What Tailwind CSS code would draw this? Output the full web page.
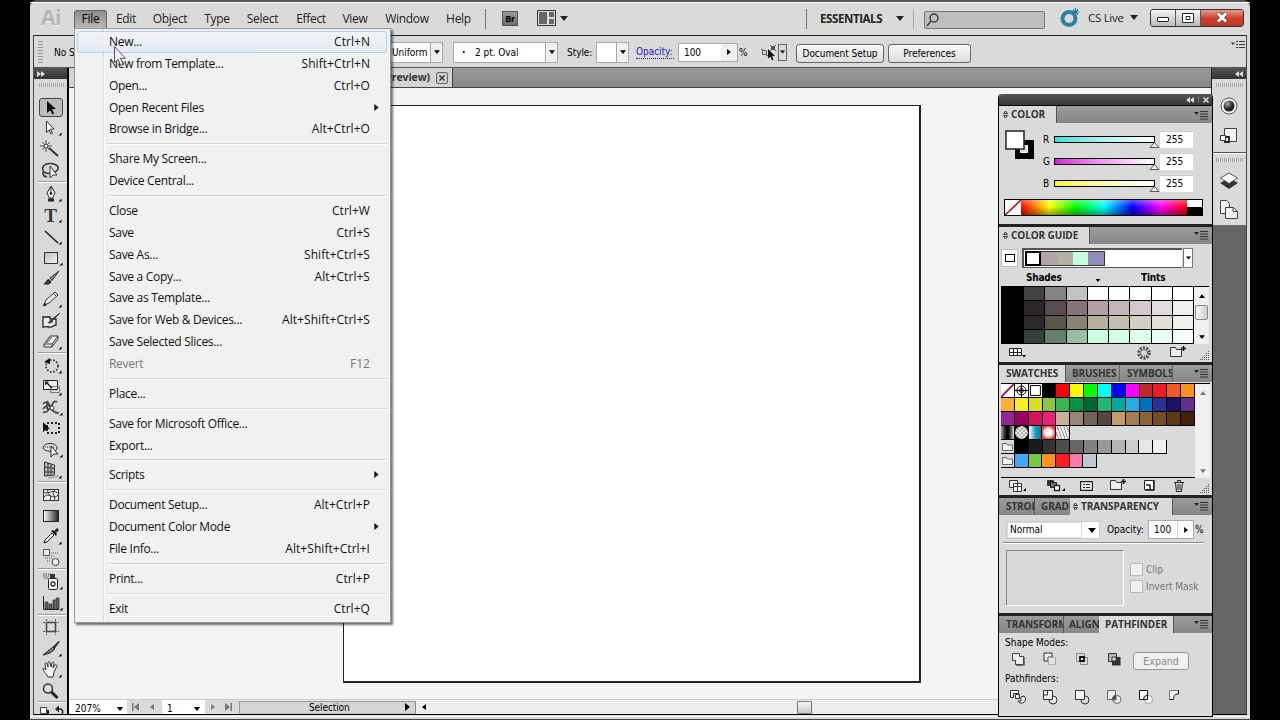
<!DOCTYPE html>
<html lang="en">
<head>
    <meta charset="UTF-8">
    <meta name="viewport" content="width=device-width, initial-scale=1.0">
    <title>Illustrator - File menu</title>
    <script src="https://cdn.jsdelivr.net/npm/@tailwindcss/browser@4"></script>
</head>
<body class="relative w-[1280px] h-[720px] overflow-hidden bg-black font-['DejaVu_Sans_Condensed','DejaVu_Sans',sans-serif] text-[10px] text-black">

    <!-- shared shapes -->
    <svg class="hidden">
        <symbol id="down" viewBox="0 0 8 5"><path d="M0 0h8L4 5z" fill="currentColor"/></symbol>
        <symbol id="right" viewBox="0 0 5 8"><path d="M0 0v8l5-4z" fill="currentColor"/></symbol>
        <symbol id="flyout" viewBox="0 0 14 10"><path d="M0 2h5L2.500 5z" fill="#222"/><path d="M6 1.500h8M6 4h8M6 6.500h8M6 9h8" stroke="#333"/></symbol>
        <symbol id="updown" viewBox="0 0 5 9"><path d="M.5 3.500L2.500 1l2 2.500zM.5 5.500L2.500 8l2-2.500z" fill="none" stroke="#222" stroke-width=".9"/></symbol>
        <symbol id="grip" viewBox="0 0 10 10"><path d="M9 1.500h1M7 3.500h1M9 3.500h1M5 5.500h1M7 5.500h1M9 5.500h1M3 7.500h1M5 7.500h1M7 7.500h1M9 7.500h1M1 9.500h1M3 9.500h1M5 9.500h1M7 9.500h1M9 9.500h1" stroke="#555"/></symbol>
        <symbol id="corner" viewBox="0 0 5 5"><path d="M4.500 .5v4h-4z" fill="#111"/></symbol>
        <symbol id="folderplus" viewBox="0 0 18 13"><path d="M1.500 11.500v-9h5l1 2h5v7z" fill="#eee" stroke="#333"/><path d="M12 3.500h5M14.500 1v5" stroke="#111" stroke-width="1.500"/></symbol>
    </svg>

    <!-- application window -->
    <div class="ml-[30px] w-[1220px] h-[720px] flex flex-col bg-[#dadada] border-t-2 border-t-[#59545a] rounded-t-md">

        <!-- menu bar -->
        <header class="h-[34px] flex items-center border-t border-white font-['Open_Sans','Noto_Sans',sans-serif] text-[12px] tracking-[-0.3px] text-[#222]">
            <div class="ml-[11px] mt-[-3px] w-[33px] text-[21px] leading-none font-bold text-[#b5b5b5] tracking-[-0.5px] [text-shadow:0_1px_0_#f4f4f4]">Ai</div>
            <div class="h-[18px] mt-[-1px] w-[33px] leading-[16px] text-center rounded-t-[3px] border border-b-0 border-[#666] bg-linear-to-b from-[#8e8e8e] to-[#b8b8b8] text-black">File</div>
            <div class="w-[38px] text-center">Edit</div>
            <div class="w-[50px] text-center">Object</div>
            <div class="w-[44px] text-center">Type</div>
            <div class="w-[47px] text-center">Select</div>
            <div class="w-[50px] text-center">Effect</div>
            <div class="w-[38px] text-center">View</div>
            <div class="w-[66px] text-center">Window</div>
            <div class="w-[37px] text-center">Help</div>
            <div class="ml-[8px] w-px h-[20px] bg-[#777]"></div>
            <div class="ml-[16px] mt-[-2px] w-[16px] h-[15px] border border-[#555] bg-linear-to-b from-[#999] to-[#6f6f6f] text-[9px] leading-[13px] font-bold text-center text-black">Br</div>
            <svg class="ml-[19px] mt-[-2px]" width="19" height="16"><path d="M.5.500h18v15H.5z" fill="#ddd" stroke="#333"/><path d="M2 2h8v12H2zM12 2h5v5h-5zM12 9h5v5h-5z" fill="#666"/></svg>
            <svg class="ml-[4px] mt-[-1px]" width="8" height="5"><use href="#down"/></svg>
            <div class="ml-[238px] w-px h-[20px] bg-[#777]"></div>
            <div class="ml-[13px] mt-[-1px] w-[70px] text-[11.500px] font-bold tracking-[-0.4px] whitespace-nowrap">ESSENTIALS</div>
            <svg class="ml-[6px] mt-[-1px]" width="8" height="5"><use href="#down"/></svg>
            <div class="ml-[9px] w-px h-[20px] bg-[#aaa]"></div>
            <div class="ml-[10px] mt-[2px] w-[121px] h-[18px] bg-[#bebebe] border border-[#777] rounded-[2px]">
                <svg width="16" height="16" fill="none" stroke="#333" stroke-width="1.300"><circle cx="9" cy="6" r="4"/><path d="M6 9l-4 5"/></svg>
            </div>
            <svg class="ml-[14px] mt-[-3px]" width="22" height="19"><circle cx="10" cy="10.500" r="6.500" fill="none" stroke="#2b7fa4" stroke-width="4"/><path d="M16.500 0v8M12.500 4h8M14 1.500l5 5M19 1.500l-5 5" stroke="#2b7fa4" stroke-width="1.100"/></svg>
            <div class="ml-[7px] mt-[-2px] w-[37px] text-[11.500px] whitespace-nowrap">CS Live</div>
            <svg class="ml-[5px] mt-[-3px]" width="8" height="5"><use href="#down"/></svg>
            <div class="ml-[12px] mt-[-3px] flex h-[18px] border border-[#333] rounded-[3px] overflow-hidden">
                <div class="w-[25px] flex items-center justify-center bg-linear-to-b from-[#f5f5f5] to-[#bbb] border-r border-[#555]"><div class="mt-[3px] w-[12px] h-[5px] bg-white border border-[#222] rounded-[1px]"></div></div>
                <div class="w-[25px] flex items-center justify-center bg-linear-to-b from-[#f5f5f5] to-[#bbb] border-r border-[#555]"><svg width="12" height="10" fill="#fff" stroke="#222"><path d="M.5.500h11v9H.5zM4 3.500h4v3H4z"/></svg></div>
                <div class="w-[42px] flex items-center justify-center bg-linear-to-b from-[#e39a8d] via-[#d0402c] via-50% to-[#b93a2a]"><svg width="12" height="11"><path d="M2 1.500l8 8M10 1.500l-8 8" stroke="#444" stroke-width="4.500"/><path d="M2 1.500l8 8M10 1.500l-8 8" stroke="#fff" stroke-width="3"/></svg></div>
            </div>
        </header>

        <!-- everything under the menu bar -->
        <div class="mx-[3px] w-[1214px] h-[680px] flex flex-col border border-t-[#222] border-b-black border-x-[#444]">

            <!-- control bar -->
            <div class="h-[31px] flex items-center pt-[1px] text-[10px] tracking-[-0.050px]">
                <div class="ml-[4px] w-[5px] h-[22px] bg-[repeating-linear-gradient(to_bottom,#999_0_1px,transparent_1px_3px)]"></div>
                <div class="ml-[11px] w-[336px] whitespace-nowrap">No Selection</div>
                <div class="w-[53px] h-[21px] flex items-center bg-white border border-[#aaa]">
                    <span class="ml-[1px] w-[40px]">Uniform</span>
                    <div class="w-[12px] h-full flex items-center justify-center border-l border-[#aaa] bg-[#f0f0f0]"><svg width="6" height="4"><use href="#down"/></svg></div>
                </div>
                <div class="ml-[10px] w-[105px] h-[21px] flex items-center bg-white border border-[#aaa]">
                    <span class="ml-[8px] w-[13px] font-bold">·</span>
                    <span class="w-[70px]">2 pt. Oval</span>
                    <div class="w-[12px] h-full flex items-center justify-center border-l border-[#aaa] bg-[#f0f0f0]"><svg width="6" height="4"><use href="#down"/></svg></div>
                </div>
                <div class="ml-[9px] w-[29px]">Style:</div>
                <div class="w-[33px] h-[21px] flex justify-end bg-white border border-[#aaa]">
                    <div class="w-[12px] h-full flex items-center justify-center border-l border-[#aaa] bg-[#f0f0f0]"><svg width="6" height="4"><use href="#down"/></svg></div>
                </div>
                <div class="ml-[7px] w-[38px] text-[#1a1ac0] border-b border-dotted border-[#1a1ac0] leading-[13px] whitespace-nowrap">Opacity:</div>
                <div class="ml-[4px] w-[60px] h-[19px] flex items-center bg-white border border-[#aaa]">
                    <span class="ml-[5px] w-[37px]">100</span>
                    <div class="w-[16px] h-full flex items-center justify-center bg-[#f0f0f0]"><svg width="4" height="6"><use href="#right"/></svg></div>
                </div>
                <div class="ml-[1px] w-[22px]">%</div>
                <svg width="17" height="17" fill="none" stroke="#555"><path d="M1.500 6.500h4v4h-4zM10.500 2.500h3v3h-3zM0 5l2 1M5 11l2 1M9 1l6 6M15 1L9 7"/><path d="M7 5l7 7-3 .2 1.500 3.500-1.500.6-1.500-3.500L7 14.500z" fill="#111" stroke="none"/></svg>
                <div class="w-[9px] h-[17px] flex items-center justify-center border border-[#666]"><svg width="5" height="4"><use href="#down"/></svg></div>
                <div class="ml-[9px] mt-[2px] w-[88px] h-[19px] leading-[17px] text-center border border-[#666] rounded-[3px] bg-linear-to-b from-[#f8f8f8] to-[#ddd]">Document Setup</div>
                <div class="ml-[4px] mt-[2px] w-[83px] h-[19px] leading-[17px] text-center border border-[#666] rounded-[3px] bg-linear-to-b from-[#f8f8f8] to-[#ddd]">Preferences</div>
                <svg class="ml-auto mr-[1px] mt-[-16px]" width="14" height="9" stroke="#333"><path d="M0 2.500h4L2 5z" fill="#333" stroke="none"/><path d="M5 1.500h2M8 1.500h6M5 4.500h2M8 4.500h6M5 7.500h2M8 7.500h6"/></svg>
            </div>

            <div class="flex-1 flex border-t border-[#555] min-h-0">

                <!-- tools -->
                <div class="w-[35px] shrink-0 flex flex-col border-r-2 border-black bg-[#d9d9d9] overflow-hidden">
                    <div class="h-[11px] shrink-0 bg-linear-to-b from-[#555] to-[#333] flex items-center pl-[3px]"><svg width="8" height="6" fill="#ddd"><path d="M0 0v6l4-3zM4 0v6l4-3z"/></svg></div>
                    <div class="mt-[4px] ml-[5px] w-[26px] h-[4px] shrink-0 bg-[repeating-linear-gradient(to_right,#aaa_0_1px,transparent_1px_2px)]"></div>
                    <div class="mt-[10px] shrink-0 flex flex-col">
                        <svg width="34" height="21"><rect x="5.500" y="1.500" width="23" height="18" rx="2.500" fill="#bdbdbd" stroke="#444"/><path d="M13 4l9 8-4 .3 2.200 4.200-2 .9-2-4.200L13 16z" fill="#111"/></svg>
                        <svg width="34" height="21"><path d="M12.500 3l7.500 8-3.500.2 2 4-1.500.8-1.800-4-2.700 2.500z" fill="#fff" stroke="#333"/><use href="#corner" x="24" y="14" width="4" height="4"/></svg>
                        <svg width="34" height="21" stroke="#333"><path d="M15 9l9 8" stroke-width="2"/><path d="M12 1v12M6 7h12M8 3l8 8M16 3l-8 8" stroke-width=".8"/><circle cx="12" cy="7" r="2" fill="#eee"/></svg>
                        <svg width="34" height="21" fill="none" stroke="#333"><path d="M10 12C6 7 11 3 17 3.500s9 4 6 7-8 4-12 2-2 5 2 4" stroke-width="1.500"/><path d="M16 6v12l3-3h4z" fill="#fff"/></svg>
                    </div>
                    <div class="ml-[4px] w-[28px] h-[2px] shrink-0 border-t border-[#999] border-b border-b-white"></div>
                    <div class="mt-[1px] shrink-0 flex flex-col">
                        <svg width="34" height="21" stroke="#222"><path d="M17 2l4 7-2.500 5h-3L13 9z" fill="#fff"/><path d="M17 3v6" /><circle cx="17" cy="9.500" r="1" fill="#222"/><path d="M14 16h6" stroke-width="3"/><use href="#corner" x="24" y="14" width="4" height="4" stroke="none"/></svg>
                        <div class="relative h-[21px] text-center font-['Liberation_Serif',serif] text-[19px] leading-[22px] font-bold text-[#333]">T<svg class="absolute left-[24px] top-[14px]" width="4" height="4"><use href="#corner"/></svg></div>
                        <svg width="34" height="21"><path d="M11 5l13 12" stroke="#222" stroke-width="1.600"/><use href="#corner" x="24" y="15" width="4" height="4"/></svg>
                        <svg width="34" height="21"><defs><linearGradient id="rg" x2="1" y2="1"><stop stop-color="#bbb"/><stop offset="1" stop-color="#f6f6f6"/></linearGradient></defs><rect x="10.500" y="5.500" width="13" height="11" fill="url(#rg)" stroke="#333"/><use href="#corner" x="25" y="15" width="4" height="4"/></svg>
                        <svg width="34" height="21"><path d="M25 3l-9 7 2 2.500z" fill="#888" stroke="#333"/><path d="M15 11c-3 0-3 4-6 5 4 2 9 0 8-3z" fill="#333"/></svg>
                        <svg width="34" height="21"><path d="M10 16l2-5 9-8 3 3-9 8z" fill="#eee" stroke="#333"/><path d="M9.500 17l1-3 2 2zM19 4l3 3" fill="#111" stroke="#333"/><use href="#corner" x="24" y="15" width="4" height="4"/></svg>
                        <svg width="34" height="21"><path d="M9 7h7v2h6v6c-3 0-3 3-7 2s-4 0-6 0V12c-1-2 1-3 0-5z" fill="#eee" stroke="#222" stroke-width="1.300"/><path d="M26 3l-9 7 1 1z" fill="#777" stroke="#333"/><path d="M18 9c-3 0-2 3-5 4 3 1 7 0 6-3z" fill="#444"/></svg>
                        <svg width="34" height="21"><path d="M10 13l6-8h8l-6 8zM10 13v3h8v-3M18 16l6-8V5" fill="#eee" stroke="#333"/><path d="M13 13l6-8h-3l-6 8z" fill="#888"/><use href="#corner" x="24" y="15" width="4" height="4"/></svg>
                    </div>
                    <div class="ml-[4px] w-[28px] h-[2px] shrink-0 border-t border-[#999] border-b border-b-white"></div>
                    <div class="mt-[1px] shrink-0 flex flex-col">
                        <svg width="34" height="21"><circle cx="18" cy="11" r="6" fill="none" stroke="#333" stroke-width="1.700" stroke-dasharray="1.600 1.600"/><path d="M10 7l6-4v6z" fill="#111"/><use href="#corner" x="24" y="15" width="4" height="4"/></svg>
                        <svg width="34" height="21" fill="none" stroke="#222"><path d="M9.500 4.500h14v9h-14z" fill="#eee"/><path d="M19.500 10.500h6v6h-9v-6z" stroke="#777"/><path d="M12 6l6 6" stroke-width="1.400"/><path d="M11 5.500h4l-4 4z" fill="#222" stroke="none"/><use href="#corner" x="24" y="16" width="4" height="4" stroke="none"/></svg>
                        <svg width="34" height="21" fill="none" stroke="#444"><path d="M9 7c3-3 5-1 4 2s2 5 4 1 3-7 6-5M9 12c3-4 6-5 8-1s4 5 8 5" stroke-width="1.700"/><path d="M13 4l5 8M9 15c3 1 5-1 6-3" stroke-width="1.500"/><circle cx="18" cy="11" r="2" fill="#eee"/><use href="#corner" x="25" y="15" width="4" height="4" stroke="none"/></svg>
                        <svg width="34" height="21"><rect x="13" y="5" width="12" height="10" fill="none" stroke="#222" stroke-width="2" stroke-dasharray="2 2"/><path d="M9 4l7 7h-3l-4 3z" fill="#111"/></svg>
                        <svg width="34" height="21"><path d="M9 9c0-6 14-6 14 0s-14 3-14 0z" fill="#ddd" stroke="#333"/><path d="M11 8h9" stroke="#333" stroke-dasharray="1 1"/><path d="M17 7v11l3-3h4z" fill="#fff" stroke="#222"/><use href="#corner" x="25" y="15" width="4" height="4"/></svg>
                        <svg width="34" height="21" fill="none" stroke="#333"><path d="M10.500 2v14l10-1V5z" fill="#bbb"/><path d="M14 3v13M17 4v11M10.500 7l10 1.500M10.500 12h10"/><path d="M14 18l11-2" stroke="#888"/><use href="#corner" x="24" y="15" width="4" height="4" stroke="none"/></svg>
                    </div>
                    <div class="ml-[4px] w-[28px] h-[2px] shrink-0 border-t border-[#999] border-b border-b-white"></div>
                    <div class="mt-[1px] shrink-0 flex flex-col">
                        <svg width="34" height="21" fill="none" stroke="#333"><rect x="9.500" y="5.500" width="15" height="11" fill="#eee"/><path d="M10 13c5-6 9 4 14-2M14 6c-2 4 5 5 2 10M21 6c-5 3 2 7-1 10M10 8c4 3 8-3 14 1"/></svg>
                        <svg width="34" height="21"><defs><linearGradient id="gr"><stop stop-color="#fff"/><stop offset="1" stop-color="#222"/></linearGradient></defs><rect x="9.500" y="5.500" width="15" height="11" fill="url(#gr)" stroke="#222"/></svg>
                        <svg width="34" height="21"><path d="M10 17l1-3 7-7 2 2-7 7z" fill="#eee" stroke="#222"/><path d="M17 5l5 5 1-2-1-1 3-3-2-2-3 3-1-1z" fill="#222"/><use href="#corner" x="24" y="15" width="4" height="4"/></svg>
                        <svg width="34" height="21"><rect x="9.500" y="2.500" width="6" height="6" fill="#eee" stroke="#555"/><path d="M17 6h7M17 9h4M11 11h8M13 14h4" stroke="#555" stroke-dasharray="1 1"/><circle cx="21.500" cy="15" r="3.500" fill="#eee" stroke="#444"/></svg>
                    </div>
                    <div class="ml-[4px] w-[28px] h-[2px] shrink-0 border-t border-[#999] border-b border-b-white"></div>
                    <div class="mt-[1px] shrink-0 flex flex-col">
                        <svg width="34" height="21"><path d="M9 3h8M9 5h6M10 7h4" stroke="#444" stroke-dasharray="1.500 1"/><rect x="14.500" y="7.500" width="9" height="11" rx="1" fill="#eee" stroke="#222"/><path d="M16 3h5v4h-5z" fill="#333"/><circle cx="19" cy="13" r="2" fill="none" stroke="#333" stroke-width="1.300"/><use href="#corner" x="25" y="15" width="4" height="4"/></svg>
                        <svg width="34" height="21"><path d="M9.500 4v13.500H25" fill="none" stroke="#222"/><path d="M11 10h3v7h-3zM15 12h3v5h-3zM19 8h2v9h-2zM22 6h3v11h-3z" fill="#666" stroke="#222" stroke-width=".7"/><use href="#corner" x="25" y="15" width="4" height="4"/></svg>
                    </div>
                    <div class="mt-[1px] ml-[4px] w-[28px] h-[2px] shrink-0 border-t border-[#999] border-b border-b-white"></div>
                    <div class="mt-[1px] shrink-0 flex flex-col">
                        <svg width="34" height="21" fill="none" stroke="#333"><path d="M12.500 5.500h9v9h-9z" stroke-width="1.500" fill="#ddd"/><path d="M9 5.500h16M9 14.500h16M12.500 2v16M21.500 2v16" stroke-dasharray="2 1" stroke="#555"/></svg>
                        <svg width="34" height="21"><path d="M25 3l-6 6 1 2 5-7z" fill="#333" stroke="#333"/><path d="M19 9l2 2-5 4-7 2z" fill="#777" stroke="#222"/><use href="#corner" x="24" y="15" width="4" height="4"/></svg>
                        <svg width="34" height="21"><path d="M14 18c-2-4-5-6-5-8s2 0 3 1l-1-6c0-2 2-1 2 0l1 3V4c0-2 2-2 2 0l1 4 1-4c0-1 2-1 2 0l-1 5 2-3c1-1 2 0 2 1l-3 6-1 5z" fill="#f6f6f6" stroke="#333"/><use href="#corner" x="24" y="15" width="4" height="4"/></svg>
                        <svg width="34" height="21"><circle cx="14" cy="8.500" r="4.500" fill="#ddd" stroke="#333" stroke-width="1.500"/><path d="M17.500 12l6 6" stroke="#222" stroke-width="3"/></svg>
                    </div>
                    <div class="ml-[4px] w-[28px] h-[2px] shrink-0 border-t border-[#999] border-b border-b-white"></div>
                    <svg class="shrink-0 mt-[2px]" width="34" height="10"><path d="M6.500 2.500h6v6h-6z" fill="#fff" stroke="#444"/><path d="M13 5h2v5h-2z" fill="#222"/><path d="M24 4h2c3 0 3 3 2 5" fill="none" stroke="#222" stroke-width="1.500"/><path d="M25 .5v7l-4-3.500z" fill="#222"/></svg>
                </div>

                <!-- document -->
                <main class="w-[1142px] shrink-0 flex flex-col bg-[#f4f4f4]">
                    <div class="h-[20px] shrink-0 flex border-b border-[#444] bg-linear-to-b from-[#9a9a9a] to-[#878787]">
                        <div class="w-[384px] flex items-center justify-end border-r border-[#444] bg-[#d4d4d4] font-['Open_Sans','Noto_Sans',sans-serif] font-bold text-[10.500px] text-[#333] tracking-[-0.1px]">
                            Untitled-1* @ 207% (RGB/Preview)
                            <svg class="ml-[6px] mr-[4px] mt-[1px]" width="12" height="12"><rect x=".5" y=".5" width="11" height="11" rx="1.500" fill="#ccc" stroke="#666"/><path d="M3.500 3.500l5 5M8.500 3.500l-5 5" stroke="#333" stroke-width="1.300"/></svg>
                        </div>
                    </div>
                    <div class="flex-1 pt-[17px] pl-[274px]">
                        <div class="w-[578px] h-[578px] bg-white border border-r-2 border-b-2 border-[#222]"></div>
                    </div>
                    <div class="h-[15px] shrink-0 flex items-center bg-[#ececec] border-t border-[#ccc] text-[10px]">
                        <div class="w-[58px] h-full flex items-center bg-white"><span class="ml-[6px] mt-[2px] w-[41px]">207%</span><svg class="mt-[4px]" width="8" height="4"><use href="#down"/></svg></div>
                        <div class="w-[35px] h-full flex items-center bg-[#dadada] text-[#777]"><svg class="ml-[5px]" width="7" height="8" fill="#777"><path d="M0 0h1.500v8H0zM7 0v8L2 4z"/></svg><svg class="ml-[11px]" width="4" height="6" fill="#777"><path d="M4 0v6L0 3z"/></svg></div>
                        <div class="w-[43px] h-full flex items-center bg-white"><span class="ml-[5px] mt-[2px] w-[26px]">1</span><svg class="mt-[4px]" width="8" height="4"><use href="#down"/></svg></div>
                        <div class="w-[34px] h-full flex items-center bg-[#dadada] text-[#777]"><svg class="ml-[6px]" width="4" height="6"><use href="#right"/></svg><svg class="ml-[10px]" width="7" height="8" fill="#777"><path d="M5.500 0H7v8H5.500zM0 0v8l5-4z"/></svg></div>
                        <div class="w-[177px] h-[13px] flex items-center border border-t-[#999] border-l-[#999] border-r-[#888] border-b-[#bbb] bg-[#d6d6d6]"><span class="ml-[69px] w-[96px] tracking-[-0.1px]">Selection</span><svg width="5" height="8"><use href="#right"/></svg></div>
                        <svg class="ml-[6px]" width="4" height="6"><path d="M4 0v6L0 3z"/></svg>
                        <div class="ml-[371px] w-[15px] h-[13px] border border-[#777] rounded-[1px] bg-linear-to-b from-[#f6f6f6] to-[#ccc]"></div>
                    </div>
                </main>

                <!-- icon dock -->
                <div class="w-[35px] shrink-0 flex flex-col bg-[#666] border-l border-[#222]">
                    <div class="h-[11px] bg-linear-to-b from-[#555] to-[#333] flex items-center justify-end pr-[3px]"><svg width="8" height="6" fill="#ddd"><path d="M4 0v6L0 3zM8 0v6L4 3z"/></svg></div>
                    <div class="h-[74px] pt-[4px] bg-[#dadada] flex flex-col items-center border-b border-[#555]">
                        <div class="w-[27px] h-[4px] bg-[repeating-linear-gradient(to_right,#aaa_0_1px,transparent_1px_2px)]"></div>
                        <svg class="mt-[9px]" width="20" height="20"><defs><radialGradient id="ball" cx=".35" cy=".3"><stop stop-color="#aaa"/><stop offset="1" stop-color="#222"/></radialGradient></defs><circle cx="10" cy="10" r="8" fill="#f4f4f4" stroke="#555"/><circle cx="10" cy="10" r="5.500" fill="url(#ball)"/></svg>
                        <svg class="mt-[10px]" width="20" height="20"><path d="M5.500 2.500h12v13h-12z" fill="#f2f2f2" stroke="#444"/><path d="M6 11h4v5H6z" fill="#eee" stroke="#222" stroke-width="1.800"/><path d="M1.500 9.500h5v5h-5z" fill="#fff" stroke="#333"/></svg>
                    </div>
                    <div class="h-[72px] pt-[4px] bg-[#dadada] flex flex-col items-center border-t border-white">
                        <div class="w-[27px] h-[4px] bg-[repeating-linear-gradient(to_right,#aaa_0_1px,transparent_1px_2px)]"></div>
                        <svg class="mt-[8px]" width="20" height="20"><path d="M1 13l9-5 9 5-9 6z" fill="#333"/><path d="M1.500 8L10 3l8.500 5-8.500 5.500z" fill="#f6f6f6" stroke="#555"/></svg>
                        <svg class="mt-[9px]" width="20" height="20" fill="#f2f2f2" stroke="#444"><path d="M1.500 1.500h6l3 3v10h-9z"/><path d="M6.500 8.500h8l4 4v7h-12z"/><path d="M14 8.500v4h4.500" fill="none"/></svg>
                    </div>
                </div>
            </div>
        </div>
        <div class="h-[4px] mt-[1px] border-t border-white border-b border-b-[#444]"></div>
    </div>

    <!-- floating panel stack -->
    <aside class="absolute left-[998px] top-[94px] w-[215px] h-[623px] flex flex-col bg-[#dadada] border-x border-b border-black rounded-t-[4px] overflow-hidden">
        <div class="h-[12px] shrink-0 flex items-center justify-end gap-[4px] pr-[3px] border-b border-black bg-linear-to-b from-[#555] to-[#383838]">
            <svg width="8" height="6" fill="#ddd"><path d="M4 0v6L0 3zM8 0v6L4 3z"/></svg>
            <div class="w-px h-[7px] bg-[#777]"></div>
            <svg width="6" height="6" stroke="#ddd" stroke-width="1.500"><path d="M.5.500l5 5M5.500.500l-5 5"/></svg>
        </div>

        <!-- color -->
        <section class="h-[118px] shrink-0">
            <div class="h-[17px] flex bg-linear-to-b from-[#9c9c9c] to-[#868686] font-['Open_Sans','Noto_Sans',sans-serif] text-[10px] font-bold text-[#333] tracking-[-0.1px]">
                <div class="w-[58px] pl-[4px] flex items-center gap-[3px] bg-[#dadada] border-r border-[#555]"><svg width="5" height="9"><use href="#updown"/></svg>COLOR</div>
                <svg class="ml-auto mr-[4px] mt-[4px]" width="14" height="10"><use href="#flyout"/></svg>
            </div>
            <div class="pt-[5px] pl-[6px] flex">
                <svg class="mt-[2px]" width="29" height="29"><path d="M10 10h19v19H10z"/><path d="M15.500 15.500h7v7h-7z" fill="#ddd" stroke="#fff"/><path d="M1 1h18v18H1z" fill="#fff" stroke="#222" stroke-width="1.500"/></svg>
                <div class="ml-[9px] flex flex-col text-[10px]">
                    <div class="h-[22px] flex items-center"><span class="w-[11px] mt-[1px]">R</span><div class="w-[101px] h-[7px] border border-black bg-linear-to-r from-[#35dfe0] to-white"></div><svg class="ml-[-6px] mt-[12px]" width="11" height="6"><path d="M1 5.500h9L5.500.500z" fill="#eee" stroke="#555"/></svg><div class="w-[33px] h-[17px] pl-[6px] leading-[15px] bg-white border-t border-[#ccc]">255</div></div>
                    <div class="h-[22px] flex items-center"><span class="w-[11px] mt-[1px]">G</span><div class="w-[101px] h-[7px] border border-black bg-linear-to-r from-[#d51cd5] to-white"></div><svg class="ml-[-6px] mt-[12px]" width="11" height="6"><path d="M1 5.500h9L5.500.500z" fill="#eee" stroke="#555"/></svg><div class="w-[33px] h-[17px] pl-[6px] leading-[15px] bg-white border-t border-[#ccc]">255</div></div>
                    <div class="h-[22px] flex items-center"><span class="w-[11px] mt-[1px]">B</span><div class="w-[101px] h-[7px] border border-black bg-linear-to-r from-[#f7f43a] to-white"></div><svg class="ml-[-6px] mt-[12px]" width="11" height="6"><path d="M1 5.500h9L5.500.500z" fill="#eee" stroke="#555"/></svg><div class="w-[33px] h-[17px] pl-[6px] leading-[15px] bg-white border-t border-[#ccc]">255</div></div>
                </div>
            </div>
            <div class="mt-[5px] ml-[5px] w-[199px] h-[17px] flex border border-black">
                <svg class="bg-white" width="16" height="15"><path d="M0 15L16 0" stroke="#a01030" stroke-width="1.600"/></svg>
                <div class="flex-1 bg-[linear-gradient(to_bottom,rgba(255,255,255,0.35),transparent_45%,rgba(0,0,0,0.4)),linear-gradient(to_right,#f00,#ff0_17%,#0f0_33%,#0ff_50%,#00f_67%,#f0f_84%,#f00)]"></div>
                <div class="w-[15px] bg-linear-to-b from-white from-50% to-black to-50%"></div>
            </div>
        </section>
        <div class="h-[3px] shrink-0 bg-[#222]"></div>

        <!-- color guide -->
        <section class="h-[135px] shrink-0">
            <div class="h-[17px] flex bg-linear-to-b from-[#9c9c9c] to-[#868686] font-['Open_Sans','Noto_Sans',sans-serif] text-[10px] font-bold text-[#333] tracking-[-0.1px]">
                <div class="w-[91px] pl-[4px] flex items-center gap-[3px] bg-[#dadada] border-r border-[#555] leading-[15px]"><svg width="5" height="9"><use href="#updown"/></svg>COLOR GUIDE</div>
                <svg class="ml-auto mr-[4px] mt-[3px]" width="14" height="10"><use href="#flyout"/></svg>
            </div>
            <div class="mt-[3px] ml-[2px] flex items-center h-[21px]">
                <div class="w-[17px] h-[18px] flex items-center justify-center bg-white border border-[#bbb]"><div class="w-[10px] h-[8px] border border-black"></div></div>
                <div class="ml-[4px] w-[160px] h-[20px] py-px pl-px flex bg-white border border-t-2 border-l-2 border-[#555] border-r-0">
                    <div class="w-[16px] border-2 border-black"></div>
                    <div class="w-[64px] flex border border-l-0 border-[#333]" id="harmony"></div>
                </div>
                <div class="ml-px w-[10px] h-[20px] flex items-center justify-center bg-white border border-[#777]"><svg width="5" height="4"><use href="#down"/></svg></div>
            </div>
            <div class="h-[18px] flex items-center font-bold tracking-[-0.2px]">
                <span class="ml-[27px] mt-px w-[69px]">Shades</span>
                <svg class="mt-[6px]" width="6" height="3"><use href="#down"/></svg>
                <span class="ml-[40px] mt-px">Tints</span>
            </div>
            <div class="ml-[2px] flex h-[58px] border-t border-black w-[208px]">
                <div class="w-[193px] flex bg-black">
                    <div class="w-[23px]"></div>
                    <div class="flex-1 grid grid-cols-8 grid-rows-4 gap-px pb-px pr-px" id="shades"></div>
                </div>
                <div class="w-[15px] flex flex-col items-center bg-[#f0f0f0] pt-[7px]">
                    <svg class="rotate-180" width="6" height="4"><use href="#down"/></svg>
                    <div class="mt-[7px] w-[13px] h-[15px] border border-[#888] rounded-[2px] bg-linear-to-r from-white to-[#ccc]"></div>
                    <svg class="mt-[15px]" width="6" height="4"><use href="#down"/></svg>
                </div>
            </div>
            <div class="h-[17px] flex items-center">
                <svg class="ml-[10px]" width="17" height="10"><path d="M.5.500h12v7H.5zM4.500 0v8M8.500 0v8M0 4.500h13" fill="#fff" stroke="#222"/><path d="M13 7h4l-2 2.500z"/></svg>
                <svg class="ml-[110px]" width="16" height="16"><circle cx="8" cy="8" r="4.800" fill="none" stroke="#555" stroke-width="4" stroke-dasharray="1.900 1.100"/></svg>
                <svg class="ml-[17px] mt-[-2px]" width="18" height="13"><use href="#folderplus"/></svg>
                <svg class="ml-[12px] mt-[5px]" width="10" height="10"><use href="#grip"/></svg>
            </div>
        </section>
        <div class="h-[3px] shrink-0 bg-[#222]"></div>

        <!-- swatches -->
        <section class="h-[130px] shrink-0">
            <div class="h-[17px] flex bg-linear-to-b from-[#9c9c9c] to-[#868686] font-['Open_Sans','Noto_Sans',sans-serif] text-[10px] leading-[16px] font-bold text-[#333] tracking-[-0.1px]">
                <div class="w-[67px] pl-[7px] bg-[#dadada] border-r border-[#555]">SWATCHES</div>
                <div class="w-[54px] pl-[6px] overflow-hidden border-r border-[#666]">BRUSHES</div>
                <div class="w-[53px] pl-[7px] overflow-hidden border-r border-[#666]">SYMBOLS</div>
                <svg class="ml-auto mr-[4px] mt-[3px]" width="14" height="10"><use href="#flyout"/></svg>
            </div>
            <div class="ml-[2px] mt-px h-[95px] w-[209px] flex border-t border-black">
                <div class="w-[194px] border-b border-black">
                    <div class="grid grid-cols-14 grid-rows-3 gap-px h-[42px] bg-black pb-px pr-px" id="swatches">
                        <svg class="w-full h-full bg-white" viewBox="0 0 13 13"><path d="M0 13L13 0" stroke="#a01030" stroke-width="1.800"/></svg>
                        <svg class="w-full h-full bg-white" viewBox="0 0 13 13" fill="none" stroke="#000"><circle cx="6.500" cy="6.500" r="4.500"/><circle cx="6.500" cy="6.500" r="2"/><path d="M6.500 0v13M0 6.500h13"/></svg>
                        <svg class="w-full h-full bg-white" viewBox="0 0 13 13"><path d="M1.500 1.500h10v10h-10z" fill="#fff" stroke="#000"/></svg>
                    </div>
                    <div class="w-[69px] h-[14px] flex gap-px pr-px pb-px bg-black">
                        <div class="flex-1 bg-linear-to-r from-[#aaa] via-black to-[#ddd]"></div>
                        <div class="flex-1 bg-black"><div class="w-full h-full rounded-full bg-[repeating-conic-gradient(#eee_0_25%,#aaa_0_50%)] bg-[length:4px_4px]"></div></div>
                        <div class="flex-1 bg-linear-to-r from-white via-[#19a5c8] to-[#0a7d9c]"></div>
                        <div class="flex-1 bg-[radial-gradient(#fff_35%,#f33_75%)]"></div>
                        <div class="flex-1 bg-[repeating-linear-gradient(70deg,#eee_0_2px,#999_2px_3px)]"></div>
                    </div>
                    <div class="w-[166px] h-[14px] flex gap-px pr-px pb-px bg-black" id="grays">
                        <svg class="w-[13px] h-[13px] shrink-0 bg-[#dadada]" viewBox="0 0 13 13"><path d="M1.500 10.500v-7h4l1 1.500h5v5.500z" fill="#f4f4f4" stroke="#666"/></svg>
                    </div>
                    <div class="w-[96px] h-[14px] flex gap-px pr-px pb-px bg-black" id="brights">
                        <svg class="w-[13px] h-[13px] shrink-0 bg-[#dadada]" viewBox="0 0 13 13"><path d="M1.500 10.500v-7h4l1 1.500h5v5.500z" fill="#f4f4f4" stroke="#666"/></svg>
                    </div>
                </div>
                <div class="w-[15px] flex flex-col items-center justify-between bg-[#f0f0f0] pt-[7px] pb-[5px] text-[#777]">
                    <svg class="rotate-180" width="6" height="4"><use href="#down"/></svg>
                    <svg width="6" height="4"><use href="#down"/></svg>
                </div>
            </div>
            <div class="h-[15px] flex items-center">
                <svg class="ml-[10px]" width="18" height="12"><path d="M.5.500h8v7h-8z" fill="#eee" stroke="#333"/><path d="M4.500 3.500h8v8h-8zM4.500 6.500h8M8.500 4v7" fill="#fff" stroke="#333"/><path d="M17 8v3h-3z"/></svg>
                <svg class="ml-[20px]" width="18" height="12"><path d="M.5.500h6v5h-6z" fill="#333" stroke="#333"/><path d="M3.500 2.500h6v5h-6z" fill="#777" stroke="#222"/><path d="M7.500 5.500h5v5h-5z" fill="#fff" stroke="#222" stroke-width="1.300"/><path d="M18 8v3h-3z"/></svg>
                <svg class="ml-[15px]" width="13" height="10"><path d="M.5.500h12v9H.5z" fill="#eee" stroke="#222" stroke-width="1.300"/><path d="M3 3.500h2M6 3.500h4M3 6.500h2M6 6.500h4" stroke="#222"/></svg>
                <svg class="ml-[16px] mt-[-2px]" width="18" height="13"><use href="#folderplus"/></svg>
                <svg class="ml-[17px]" width="11" height="11"><path d="M.5.500h9v9h-9z" fill="#fff" stroke="#222"/><path d="M10 0v10H1M2 5h4v5" fill="none" stroke="#222" stroke-width="1.500"/></svg>
                <svg class="ml-[19px]" width="11" height="12" stroke="#222" fill="none"><path d="M0 2.500h10M3.500 2V.500h3V2M1.500 3l1 8.500h5l1-8.500M4 4v6M6 4v6"/></svg>
                <svg class="ml-auto mr-[3px] mt-[4px]" width="10" height="10"><use href="#grip"/></svg>
            </div>
        </section>
        <div class="h-[3px] shrink-0 bg-[#222]"></div>

        <!-- transparency -->
        <section class="h-[115px] shrink-0">
            <div class="h-[17px] flex bg-linear-to-b from-[#9c9c9c] to-[#868686] font-['Open_Sans','Noto_Sans',sans-serif] text-[10px] leading-[16px] font-bold text-[#333] tracking-[-0.1px]">
                <div class="w-[36px] pl-[7px] overflow-hidden border-r border-[#555]">STROKE</div>
                <div class="w-[35px] pl-[6px] overflow-hidden">GRADIENT</div>
                <div class="w-[103px] pl-[3px] flex items-center gap-[3px] bg-[#dadada] border-r border-[#555]"><svg width="5" height="9"><use href="#updown"/></svg><span class="mt-[-1px]">TRANSPARENCY</span></div>
                <svg class="ml-auto mr-[4px] mt-[3px]" width="14" height="10"><use href="#flyout"/></svg>
            </div>
            <div class="ml-[7px] mt-[5px] h-[19px] flex items-center">
                <div class="w-[94px] h-[18px] flex items-center bg-white border border-[#ccc]"><span class="w-[75px] h-full pl-[2px] leading-[14px] border border-[#ddd]">Normal</span><svg class="ml-[6px] mt-[2px]" width="8" height="5"><use href="#down"/></svg></div>
                <span class="ml-[7px] w-[41px]">Opacity:</span>
                <div class="w-[46px] h-[19px] flex items-center bg-white border border-[#aaa]"><span class="pl-[5px] w-[28px]">100</span><div class="w-[16px] h-full flex items-center justify-center border-l border-[#ccc]"><svg width="4" height="6"><use href="#right"/></svg></div></div>
                <span class="ml-px">%</span>
            </div>
            <div class="ml-[4px] mt-[3px] w-[201px] h-[2px] border-t border-[#888] border-b border-b-white"></div>
            <div class="ml-[7px] mt-[6px] flex">
                <div class="w-[118px] h-[56px] border border-t-[#888] border-l-[#888] border-white bg-[#d8d8d8]"></div>
                <div class="ml-[6px] mt-[13px] flex flex-col gap-[4px] text-[#777]">
                    <div class="flex items-center h-[13px] gap-[3px]"><div class="w-[13px] h-[13px] bg-[#f0f0f0] border border-[#bbb]"></div>Clip</div>
                    <div class="flex items-center h-[13px] gap-[3px]"><div class="w-[13px] h-[13px] bg-[#f0f0f0] border border-[#bbb]"></div>Invert Mask</div>
                </div>
            </div>
        </section>
        <div class="h-[3px] shrink-0 bg-[#222]"></div>

        <!-- pathfinder -->
        <section class="flex-1">
            <div class="h-[17px] flex bg-linear-to-b from-[#9c9c9c] to-[#868686] font-['Open_Sans','Noto_Sans',sans-serif] text-[10px] leading-[16px] font-bold text-[#333] tracking-[-0.1px]">
                <div class="w-[65px] pl-[7px] overflow-hidden border-r border-[#555]">TRANSFORM</div>
                <div class="w-[35px] pl-[5px] overflow-hidden">ALIGN</div>
                <div class="w-[75px] pl-[6px] bg-[#dadada] border-r border-[#555]">PATHFINDER</div>
                <svg class="ml-auto mr-[4px] mt-[3px]" width="14" height="10"><use href="#flyout"/></svg>
            </div>
            <div class="ml-[6px] mt-[3px] h-[13px] leading-[13px]">Shape Modes:</div>
            <div class="ml-[12px] mt-px h-[18px] flex items-center">
                <svg width="14" height="14"><path d="M1.500 1.500h7v3h4v8h-8v-4h-3z" fill="#eee" stroke="#444"/><path d="M13.500 5v8.500H5" fill="none" stroke="#777"/></svg>
                <svg class="ml-[18px]" width="14" height="14"><path d="M1 1h8v4H5v4H1z" fill="#eee" stroke="#333"/><path d="M5.500 5.500h7v7h-7z" fill="#e4e4e4" stroke="#aaa"/></svg>
                <svg class="ml-[18px]" width="14" height="14" fill="none"><path d="M5.500 5.500h7v7h-7zM1.500 1.500h8v8h-8z" stroke="#888"/><path d="M5 5h4v4H5z" fill="#eee" stroke="#111" stroke-width="1.800"/></svg>
                <svg class="ml-[18px]" width="14" height="14"><path d="M1.500 1.500h8v8h-8z" fill="#bbb" stroke="#333"/><path d="M13.500 5v8.500H5V9h4V5z" fill="#333"/><path d="M5 5h4v4H5z" fill="#ddd" stroke="#333"/></svg>
                <div class="ml-[12px] mt-[3px] w-[56px] h-[18px] leading-[16px] text-center text-[10.500px] text-[#888] bg-[#f0f0f0] border border-[#999] rounded-[3px]">Expand</div>
            </div>
            <div class="ml-[6px] mt-[4px] h-[13px] leading-[13px]">Pathfinders:</div>
            <div class="ml-[11px] mt-[3px] h-[18px] flex items-center gap-[16px]">
                <svg width="16" height="16" stroke="#333" fill="#eee"><path d="M.5 1.500h8v3h-5v4h-3z"/><path d="M5.500 5.500h4v4h-4z"/><path d="M14 7a4 4 0 1 1-6 5h3V8z"/></svg>
                <svg width="16" height="16" stroke="#333" fill="#eee"><circle cx="11" cy="11" r="4"/><path d="M1.500 1.500h9v9h-9zM5.500 2v4h-4"/></svg>
                <svg width="16" height="16" stroke="#333" fill="#ddd"><circle cx="11" cy="11" r="4"/><path d="M1.500 1.500h9v9h-9z" fill="#f4f4f4"/></svg>
                <svg width="16" height="16" stroke="#666" fill="#eee"><path d="M1.500 1.500h8v9h-8z"/><circle cx="11" cy="10.500" r="4"/><path d="M10 6v5H6c0-3 2-5 4-5z" fill="#444"/></svg>
                <svg width="16" height="16" stroke="#333" fill="#fff"><circle cx="10.500" cy="10.500" r="4" stroke="#999"/><path d="M1.500 1.500h8v9h-8zM9.500 6c-3 1-4 2-4 5" stroke="#111"/></svg>
                <svg class="ml-[-2px]" width="16" height="16"><path d="M1.500 1.500h9v3c-4 0-5 3-5 6h-4z" fill="#f4f4f4"/><path d="M1.500 10V1.500H11" fill="none" stroke="#777"/><path d="M10.500 1v4c-4 0-5 2-5 5.500h-4" fill="none" stroke="#111"/></svg>
            </div>
        </section>
    </aside>

    <!-- File menu -->
    <nav class="absolute left-[74px] top-[28px] w-[317px] h-[595px] pt-[2px] flex flex-col bg-[linear-gradient(to_right,#f1f1f1_28px,#dcdcdc_28px,#dcdcdc_29px,#fbfbfb_29px,#fbfbfb_30px,#f1f1f1_30px)] border border-[#979797] shadow-[2px_2px_2px_rgba(0,0,0,0.55)] font-['Open_Sans','Noto_Sans',sans-serif] text-[12px] tracking-[-0.3px] text-[#111] leading-[21px] [&>div]:h-[21.870px] [&>div]:shrink-0 [&>div]:flex [&>div]:justify-between [&>div]:pl-[34px] [&>div]:pr-[20px] [&>div>span:nth-of-type(2)]:tracking-[0.050px] [&>hr]:my-[3px] [&>hr]:ml-[32px] [&>hr]:mr-[3px] [&>hr]:h-[2px] [&>hr]:shrink-0 [&>hr]:border-t-[#d8d8d8] [&>hr]:border-b [&>hr]:border-b-white">
        <div class="relative"><i class="absolute left-[2px] right-[3px] top-0 h-[22px] border border-[#aecff7] rounded-[3px] bg-linear-to-b from-[#f0f3f9]/80 to-[#e2eaf6]/80"></i><span class="relative">New...</span><span class="relative">Ctrl+N</span></div>
        <div><span>New from Template...</span><span>Shift+Ctrl+N</span></div>
        <div><span>Open...</span><span>Ctrl+O</span></div>
        <div><span>Open Recent Files</span><svg class="mt-[7px] mr-[-9px]" width="5" height="7"><use href="#right"/></svg></div>
        <div><span>Browse in Bridge...</span><span>Alt+Ctrl+O</span></div>
        <hr>
        <div><span>Share My Screen...</span></div>
        <div><span>Device Central...</span></div>
        <hr>
        <div><span>Close</span><span>Ctrl+W</span></div>
        <div><span>Save</span><span>Ctrl+S</span></div>
        <div><span>Save As...</span><span>Shift+Ctrl+S</span></div>
        <div><span>Save a Copy...</span><span>Alt+Ctrl+S</span></div>
        <div><span>Save as Template...</span></div>
        <div><span>Save for Web &amp; Devices...</span><span>Alt+Shift+Ctrl+S</span></div>
        <div><span>Save Selected Slices...</span></div>
        <div class="text-[#777]"><span>Revert</span><span>F12</span></div>
        <hr>
        <div><span>Place...</span></div>
        <hr>
        <div><span>Save for Microsoft Office...</span></div>
        <div><span>Export...</span></div>
        <hr>
        <div><span>Scripts</span><svg class="mt-[7px] mr-[-9px]" width="5" height="7"><use href="#right"/></svg></div>
        <hr>
        <div><span>Document Setup...</span><span>Alt+Ctrl+P</span></div>
        <div><span>Document Color Mode</span><svg class="mt-[7px] mr-[-9px]" width="5" height="7"><use href="#right"/></svg></div>
        <div><span>File Info...</span><span>Alt+Shift+Ctrl+I</span></div>
        <hr>
        <div><span>Print...</span><span>Ctrl+P</span></div>
        <hr>
        <div><span>Exit</span><span>Ctrl+Q</span></div>
    </nav>

    <!-- mouse pointer -->
    <svg class="absolute left-[113px] top-[45px]" width="15" height="24"><path d="M1.500 1.500v16l3.500-3.300 2.700 6.300 2.500-1-2.700-6.200h5z" fill="#f0f2f6" stroke="#555"/></svg>

    <script>
        // fill a container with coloured cells
        function fill(id, colors) {
            const box = document.getElementById(id);
            colors.split(' ').forEach(c => {
                const cell = document.createElement('div');
                cell.className = 'flex-1';
                cell.style.background = '#' + c;
                box.appendChild(cell);
            });
        }

        fill('harmony', 'b5a4a4 b3b0a0 c9fcdb 8f8db8');
        fill('shades', '404342 818584 bfc3c2 fff fff fff fff fff ' +
            '2d2627 5a4c4e 877477 b5a1a3 c3b6b7 d3c8c9 e2dddd f0eeee ' +
            '2c2a26 595648 87846f b4b09c c2beb0 d2cfc4 e1dfd8 f0efec ' +
            '33403a 658069 98bfa2 cbffdb d5ffe2 dfffe9 eafff1 f5fffa');
        fill('swatches', '000 f00 ff0 0f0 0ff 00f f0f c1272d ed1c24 f15a24 f7931e ' +
            'fbb03b fcee21 d9e021 8cc63f 39b54a 009245 006837 22b573 00a99d 29abe2 0071bc 2e3192 1b1464 662d91 ' +
            '93278f 9e005d d4145a ed1e79 c7b299 998675 736357 534741 c69c6d a67c52 8c6239 754c24 603813 42210b');
        fill('grays', '000 1a1a1a 333 4d4d4d 666 808080 999 b3b3b3 ccc e6e6e6 f2f2f2');
        fill('brights', '3fa9f5 7ac943 ff931e ff1d25 ff7bac bdccd4');
    </script>
</body>
</html>
